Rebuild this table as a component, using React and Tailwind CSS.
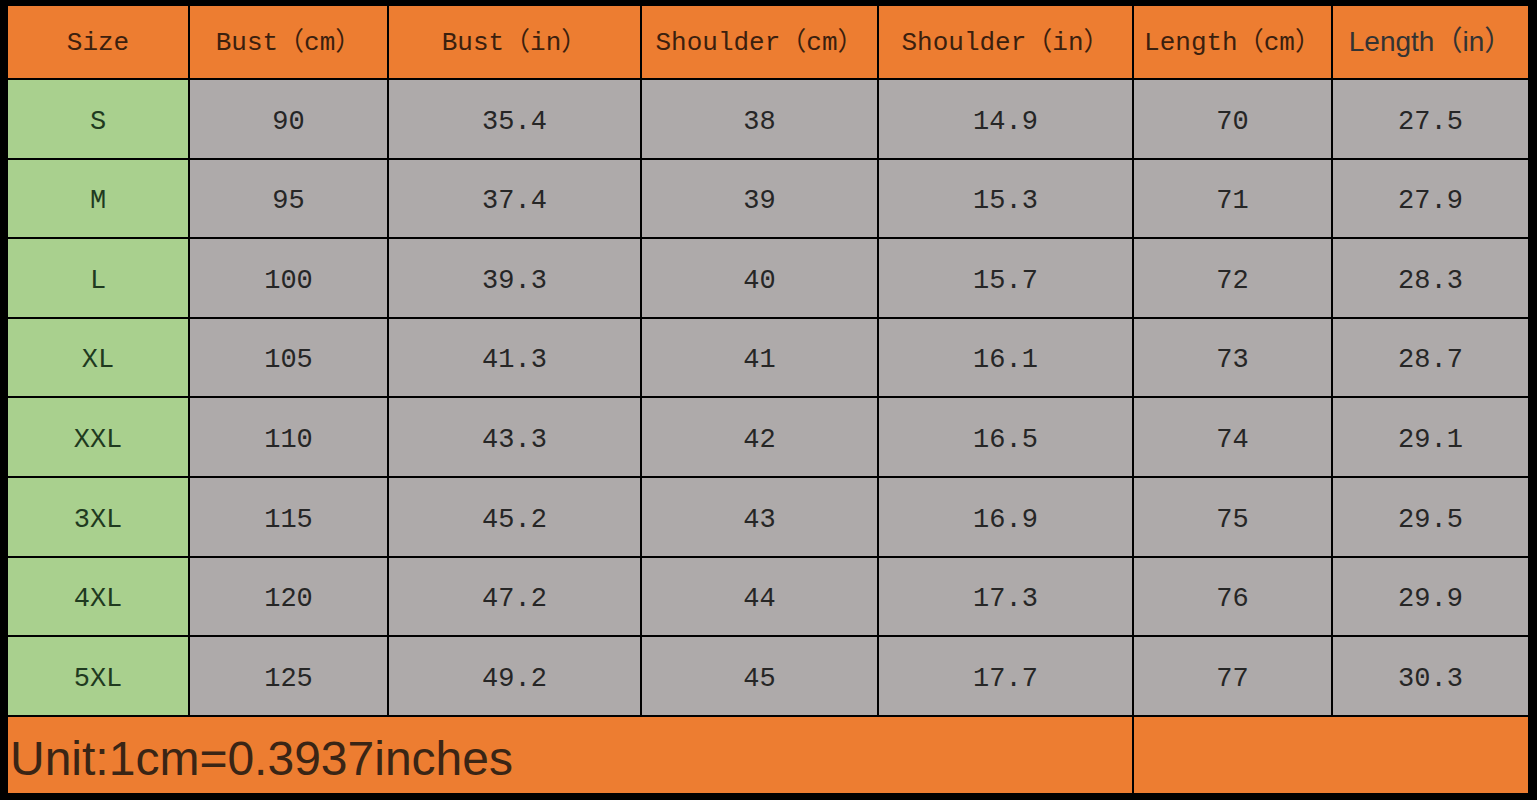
import React from "react";

const headers = ["Size", "Bust（cm）", "Bust（in）", "Shoulder（cm）", "Shoulder（in）", "Length（cm）"];

const rows = [
  ["S", "90", "35.4", "38", "14.9", "70", "27.5"],
  ["M", "95", "37.4", "39", "15.3", "71", "27.9"],
  ["L", "100", "39.3", "40", "15.7", "72", "28.3"],
  ["XL", "105", "41.3", "41", "16.1", "73", "28.7"],
  ["XXL", "110", "43.3", "42", "16.5", "74", "29.1"],
  ["3XL", "115", "45.2", "43", "16.9", "75", "29.5"],
  ["4XL", "120", "47.2", "44", "17.3", "76", "29.9"],
  ["5XL", "125", "49.2", "45", "17.7", "77", "30.3"],
];

const mono = { fontFamily: '"Liberation Mono", "Noto Sans CJK SC", monospace' };
const sans = { fontFamily: '"Liberation Sans", "Noto Sans CJK SC", sans-serif' };

export default function App() {
  return (
    <div className="w-[1537px] h-[800px] bg-black pt-[6px] pl-[8px]">
      <div className="grid grid-cols-[180px_197px_251px_235px_253px_197px_195px] grid-rows-[72px_repeat(8,77.6px)_76px] gap-[2px] w-[1520px] bg-black">
        {headers.map((h) => (
          <div
            key={h}
            style={mono}
            className="bg-[#ed7d31] flex items-center justify-center pt-[3px] text-[26px] text-[#3b200e] whitespace-nowrap"
          >
            {h}
          </div>
        ))}
        <div
          style={sans}
          className="bg-[#ed7d31] flex items-center justify-center text-[28px] text-[#333] whitespace-nowrap"
        >
          Length（in）
        </div>

        {rows.map((r) =>
          r.map((v, i) => (
            <div
              key={r[0] + i}
              style={mono}
              className={
                i === 0
                  ? "bg-[#a9d08e] flex items-center justify-center pt-[6px] text-[27px] text-[#1f3a1f]"
                  : "bg-[#aeaaaa] flex items-center justify-center pt-[6px] text-[27px] text-[#262626]"
              }
            >
              {v}
            </div>
          ))
        )}

        <div className="col-span-5 bg-[#ed7d31] flex items-center pl-[2px] pt-[8px]">
          <span style={sans} className="text-[48px] text-[#3a2515] leading-none">
            Unit:1cm=0.3937inches
          </span>
        </div>
        <div className="col-span-2 bg-[#ed7d31]" />
      </div>
    </div>
  );
}
